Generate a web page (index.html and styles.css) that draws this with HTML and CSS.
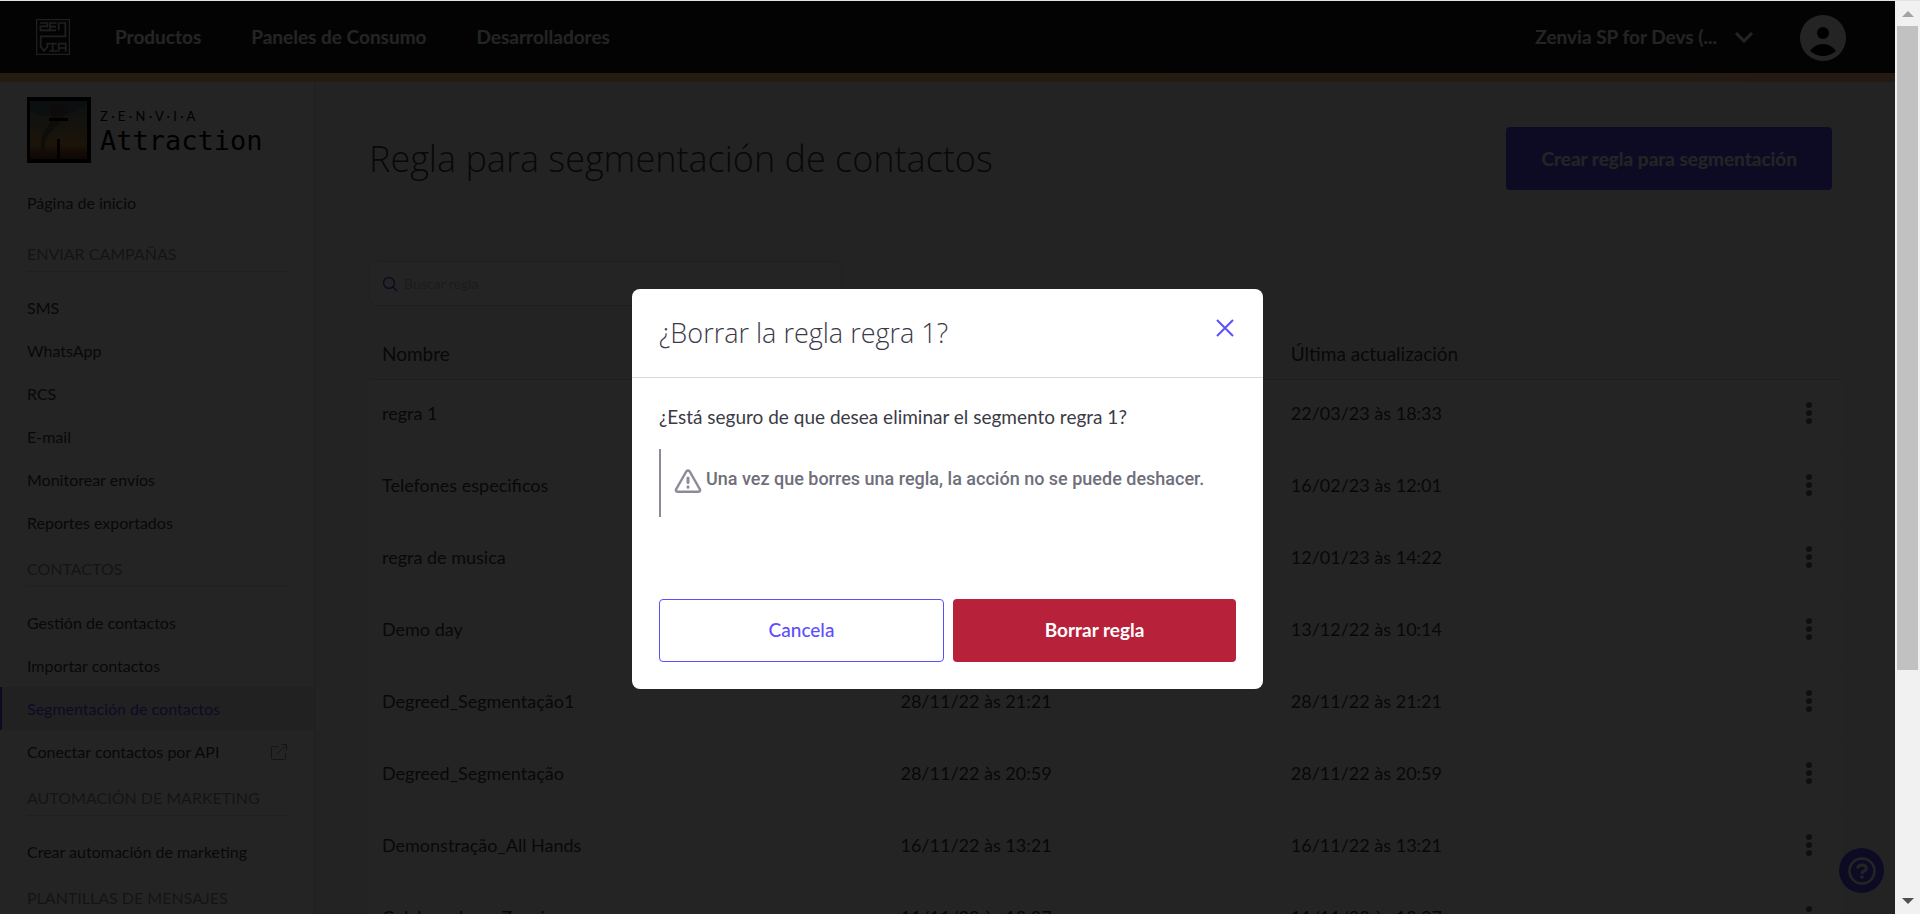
FILE: index.html
```
<!DOCTYPE html>
<html lang="es">
<head>
    <meta charset="UTF-8">
    <title>Regla para segmentación de contactos</title>
    <link rel="stylesheet" href="styles.css">
</head>
<body>
    <!-- icono de tres puntos, se repite en cada fila -->
    <svg class="sprite" aria-hidden="true">
        <symbol id="dots" viewBox="0 0 8 24">
            <circle cx="4" cy="4" r="3"/>
            <circle cx="4" cy="12" r="3"/>
            <circle cx="4" cy="20" r="3"/>
        </symbol>
    </svg>

    <div class="page">
        <header class="topbar">
            <a class="brand" href="#" aria-label="Zenvia">
                <svg width="34" height="36" viewBox="0 0 102 108" fill="none" stroke="#fff">
                    <rect x="2" y="2" width="98" height="104" stroke-width="3"/>
                    <path stroke-width="5" stroke-opacity=".85" d="M12 12H34V22H13V34H60M62 12H42V34M42 23H60M68 34V12H88V52H14V83L24 96L34 84V74H62M50 74V96M40 96H64M68 98V74H89V98M68 87H89"/>
                </svg>
            </a>
            <nav class="menu">
                <a href="#">Productos</a>
                <a href="#">Paneles de Consumo</a>
                <a href="#">Desarrolladores</a>
            </nav>
            <button class="account" type="button">
                Zenvia SP for Devs (...
                <svg width="18" height="12" viewBox="0 0 18 12" fill="none" stroke="#fff" stroke-width="3"><path d="M1 2L9 10L17 2"/></svg>
            </button>
            <a class="avatar" href="#" aria-label="Perfil">
                <svg width="48" height="48" viewBox="0 0 48 48">
                    <circle cx="24" cy="25" r="23" fill="#fff"/>
                    <circle cx="24" cy="20" r="6"/>
                    <path d="M11 38Q16 31 24 31Q32 31 37 38Q31 43 24 43Q17 43 11 38Z"/>
                </svg>
            </a>
        </header>
        <div class="stripe"></div>

        <div class="layout">
            <aside class="sidebar">
                <a class="product" href="#">
                    <svg width="64" height="66" viewBox="0 0 64 66">
                        <defs>
                            <linearGradient id="sky" x1="0" y1="0" x2="0" y2="1">
                                <stop offset="0" stop-color="#567f80"/>
                                <stop offset=".4" stop-color="#8f7f5c"/>
                                <stop offset=".75" stop-color="#c09048"/>
                                <stop offset=".88" stop-color="#8f5030"/>
                                <stop offset="1" stop-color="#5b3424"/>
                            </linearGradient>
                        </defs>
                        <rect width="64" height="66"/>
                        <rect x="3" y="4" width="57" height="58" fill="url(#sky)"/>
                        <path d="M3 4H60V8Q42 20 30 17Q14 22 3 14Z" fill="#44606a" opacity=".7"/>
                        <path d="M20 6Q30 20 17 34Q11 46 16 58H19Q15 46 23 36Q38 22 42 8Z" fill="#5f5142" opacity=".8"/>
                        <path d="M22 21H41V24H22ZM30 42H33V62H30Z"/>
                    </svg>
                    <span class="product-name">
                        <span class="product-brand">Z · E · N · V · I · A</span>
                        <span class="product-title">Attraction</span>
                    </span>
                </a>
                <nav class="side-nav">
                    <a class="home" href="#">Página de inicio</a>
                    <h2>ENVIAR CAMPAÑAS</h2>
                    <a href="#">SMS</a>
                    <a href="#">WhatsApp</a>
                    <a href="#">RCS</a>
                    <a href="#">E-mail</a>
                    <a href="#">Monitorear envíos</a>
                    <a href="#">Reportes exportados</a>
                    <h2>CONTACTOS</h2>
                    <a href="#">Gestión de contactos</a>
                    <a href="#">Importar contactos</a>
                    <a class="active" href="#">Segmentación de contactos</a>
                    <a href="#">
                        Conectar contactos por API
                        <svg width="16" height="16" viewBox="0 0 16 16" fill="none" stroke="#8f8f99"><path d="M7 2.5H1.500Q.5 2.500.5 3.500V14.500Q.5 15.500 1.500 15.500H13.500Q14.500 15.500 14.500 14.500V9M6 10L15.500.5M10.500.5H15.500V6"/></svg>
                    </a>
                    <h2>AUTOMACIÓN DE MARKETING</h2>
                    <a href="#">Crear automación de marketing</a>
                    <h2>PLANTILLAS DE MENSAJES</h2>
                </nav>
            </aside>

            <main class="content">
                <div class="heading">
                    <h1>Regla para segmentación de contactos</h1>
                    <button class="create" type="button">Crear regla para segmentación</button>
                </div>
                <label class="search">
                    <svg width="16" height="16" viewBox="0 0 16 16" fill="none" stroke="#5c4fff" stroke-width="1.500"><circle cx="7" cy="7" r="5.500"/><path d="M11 11L15 15"/></svg>
                    <input type="search" placeholder="Buscar regla" aria-label="Buscar regla">
                </label>
                <table class="rules">
                    <thead>
                        <tr><th class="col-name">Nombre</th><th class="col-date"></th><th>Última actualización</th><th class="col-more"></th></tr>
                    </thead>
                    <tbody>
                        <tr><td>regra 1</td><td></td><td>22/03/23 às 18:33</td><td><button class="more" type="button" aria-label="Opciones"><svg width="8" height="24"><use href="#dots"/></svg></button></td></tr>
                        <tr><td>Telefones especificos</td><td></td><td>16/02/23 às 12:01</td><td><button class="more" type="button" aria-label="Opciones"><svg width="8" height="24"><use href="#dots"/></svg></button></td></tr>
                        <tr><td>regra de musica</td><td></td><td>12/01/23 às 14:22</td><td><button class="more" type="button" aria-label="Opciones"><svg width="8" height="24"><use href="#dots"/></svg></button></td></tr>
                        <tr><td>Demo day</td><td></td><td>13/12/22 às 10:14</td><td><button class="more" type="button" aria-label="Opciones"><svg width="8" height="24"><use href="#dots"/></svg></button></td></tr>
                        <tr><td>Degreed_Segmentação1</td><td>28/11/22 às 21:21</td><td>28/11/22 às 21:21</td><td><button class="more" type="button" aria-label="Opciones"><svg width="8" height="24"><use href="#dots"/></svg></button></td></tr>
                        <tr><td>Degreed_Segmentação</td><td>28/11/22 às 20:59</td><td>28/11/22 às 20:59</td><td><button class="more" type="button" aria-label="Opciones"><svg width="8" height="24"><use href="#dots"/></svg></button></td></tr>
                        <tr><td>Demonstração_All Hands</td><td>16/11/22 às 13:21</td><td>16/11/22 às 13:21</td><td><button class="more" type="button" aria-label="Opciones"><svg width="8" height="24"><use href="#dots"/></svg></button></td></tr>
                        <tr><td>Colaboradores Zenvia</td><td>11/11/22 às 18:37</td><td>11/11/22 às 18:37</td><td><button class="more" type="button" aria-label="Opciones"><svg width="8" height="24"><use href="#dots"/></svg></button></td></tr>
                    </tbody>
                </table>
            </main>
        </div>

        <button class="help" type="button" aria-label="Ayuda">
            <svg width="28" height="28" viewBox="0 0 28 28" fill="none" stroke="#fff">
                <circle cx="14" cy="14" r="12.500" stroke-width="2.500"/>
                <path stroke-width="3" d="M9.500 11.500Q10 8 14 8Q18.300 8 18.300 11.200Q18.300 13.200 16 14.200Q14 15 14 17"/>
                <circle cx="14" cy="20" r="1.800" fill="#fff" stroke="none"/>
            </svg>
        </button>

        <div class="backdrop">
            <div class="dialog" role="dialog" aria-modal="true" aria-labelledby="dialog-title">
                <div class="dialog-head">
                    <h2 id="dialog-title">¿Borrar la regla regra 1?</h2>
                    <button class="close" type="button" aria-label="Cerrar">
                        <svg width="18" height="18" viewBox="0 0 18 18" fill="none" stroke="#5c4fff" stroke-width="2"><path d="M1 1L17 17M17 1L1 17"/></svg>
                    </button>
                </div>
                <div class="dialog-body">
                    <p class="question">¿Está seguro de que desea eliminar el segmento regra 1?</p>
                    <div class="warning">
                        <svg width="28" height="24" viewBox="0 0 28 24" fill="none" stroke="#8b8c98" stroke-width="2.500" stroke-linejoin="round" stroke-linecap="round">
                            <path d="M12.300 2.500Q14 .5 15.700 2.500L26 20.500Q26.500 22.500 24.500 22.700H3.500Q1.500 22.500 2 20.500Z"/>
                            <path d="M14 9V13.500M14 17.800V18.200" stroke-width="3"/>
                        </svg>
                        <p>Una vez que borres una regla, la acción no se puede deshacer.</p>
                    </div>
                    <div class="actions">
                        <button class="cancel" type="button">Cancela</button>
                        <button class="delete" type="button">Borrar regla</button>
                    </div>
                </div>
            </div>
        </div>
    </div>

    <div class="scrollbar" aria-hidden="true">
        <svg class="arrow" width="12" height="6" viewBox="0 0 12 6"><path d="M0 6L6 0L12 6Z" fill="#a3a3a3"/></svg>
        <div class="track"><div class="thumb"></div></div>
        <svg class="arrow" width="12" height="6" viewBox="0 0 12 6"><path d="M0 0L6 6L12 0Z" fill="#505050"/></svg>
    </div>
</body>
</html>
```
FILE: styles.css
```
*{
    margin: 0;
    padding: 0;
    box-sizing: border-box;
}
body{
    display: flex;
    height: 100vh;
    overflow: hidden;
    border-top: 1px solid #e0e3e0;
    font-family: Lato, "Open Sans", sans-serif;
    color: #3b3a47;
}
a{
    color: inherit;
    text-decoration: none;
}
button{
    font: 700 19px/24px Lato, sans-serif;
    border: 0;
    background: none;
    cursor: pointer;
}
svg{
    display: block;
    flex: none;
}
.sprite{
    position: absolute;
    width: 0;
    height: 0;
}
.page{
    position: relative;
    flex: 1;
    display: flex;
    flex-direction: column;
    overflow: hidden;
    background: #f8f8f8;
}

/* barra superior */
.topbar{
    flex: none;
    display: flex;
    align-items: center;
    height: 72px;
    padding: 0 48px 0 36px;
    background: #1b1b1b;
    color: #fff;
    font: 700 19px/24px Lato, sans-serif;
}
.menu{
    flex: 1;
    display: flex;
    gap: 50px;
    margin-left: 45px;
}
.account{
    display: flex;
    align-items: center;
    gap: 18px;
    margin-right: 46px;
    color: #fff;
}
.stripe{
    flex: none;
    height: 9px;
    background: linear-gradient(90deg, #fac86b, #ffb987);
}
.layout{
    flex: 1;
    display: flex;
    min-height: 0;
}

/* menu lateral */
.sidebar{
    flex: none;
    width: 315px;
    overflow: hidden;
    border-right: 1px solid #dcdcdc;
    background: #fff;
}
.product{
    display: flex;
    gap: 9px;
    padding: 15px 27px 18px;
    color: #000;
}
.product-name{
    display: flex;
    flex-direction: column;
    padding-top: 9px;
}
.product-brand{
    font: 13px/20px Lato, sans-serif;
}
.product-title{
    font: 27px/30px "DejaVu Sans Mono", monospace;
}
.side-nav a{
    display: flex;
    align-items: center;
    justify-content: space-between;
    height: 43px;
    padding: 0 27px;
    font-size: 16px;
}
.side-nav .home{
    margin-bottom: 5px;
}
.side-nav .active{
    padding-left: 25px;
    border-left: 2px solid #5c4fff;
    background: #e9e9ec;
    color: #5c4fff;
}
.side-nav h2{
    margin: 0 27px 14px;
    padding: 14px 0 6px;
    border-bottom: 1px solid #dcdcdc;
    font-size: 16px;
    font-weight: 400;
    line-height: 22px;
    color: #8f8f99;
}

/* contenido */
.content{
    flex: 1;
    padding: 45px 53px 0 54px;
}
.heading{
    display: flex;
    align-items: center;
    justify-content: space-between;
    padding-right: 10px;
}
.heading h1{
    font-family: "Open Sans", sans-serif;
    font-size: 36px;
    font-weight: 300;
}
.create{
    height: 63px;
    padding: 0 35px;
    border-radius: 4px;
    background: #5c4fff;
    color: #fff;
}
.search{
    display: flex;
    align-items: center;
    gap: 6px;
    width: 473px;
    height: 45px;
    margin-top: 71px;
    padding: 0 12px;
    border: 1px solid #dcdcdc;
    border-radius: 8px;
    background: #fff;
}
.search input{
    flex: 1;
    border: 0;
    outline: 0;
    background: none;
    font: 14px/20px Lato, sans-serif;
}
.search input::placeholder{
    color: #c0c0c8;
}
.rules{
    width: 100%;
    margin-top: 24px;
    border-collapse: collapse;
    table-layout: fixed;
    text-align: left;
}
.rules th{
    height: 49px;
    border-bottom: 1px solid #dcdcdc;
    padding: 0 13px;
    font: 19px/24px Lato, sans-serif;
}
.rules td{
    height: 72px;
    padding: 0 13px 4px;
    border-bottom: 1px solid #f4f4f4;
    background: #fff;
    font-size: 18px;
}
.col-name{
    width: 35.2%;
}
.col-date{
    width: 26.5%;
}
.col-more{
    width: 76px;
}
.more{
    display: block;
    margin-left: auto;
    padding: 0 16px;
    fill: #6e6e80;
}

.help{
    position: absolute;
    right: 11px;
    bottom: 21px;
    display: flex;
    align-items: center;
    justify-content: center;
    width: 45px;
    height: 45px;
    border-radius: 50%;
    background: #5c4fff;
}

/* ventana modal */
.backdrop{
    position: absolute;
    top: 0;
    right: 0;
    bottom: 0;
    left: 0;
    display: flex;
    justify-content: center;
    align-items: flex-start;
    padding-top: 288px;
    background: rgba(0, 0, 0, .86);
}
.dialog{
    width: 631px;
    border-radius: 8px;
    background: #fff;
}
.dialog-head{
    display: flex;
    align-items: flex-start;
    justify-content: space-between;
    padding: 24px 27px;
    border-bottom: 1px solid #d8d8dc;
}
.dialog-head h2{
    font-family: "Open Sans", sans-serif;
    font-size: 27px;
    font-weight: 300;
    line-height: 40px;
}
.close{
    margin: 6px 2px;
}
.dialog-body{
    padding: 27px;
}
.question{
    font: 19px/24px Lato, sans-serif;
}
.warning{
    display: flex;
    gap: 4px;
    height: 68px;
    margin: 20px 0 82px;
    padding: 18px 0 0 13px;
    border-left: 2px solid #8b8c98;
    font: 500 18px/24px Roboto, sans-serif;
    color: #6e6f7b;
}
.warning svg{
    margin-top: 2px;
}
.actions{
    display: flex;
    gap: 9px;
}
.actions button{
    flex: 1;
    height: 63px;
    padding-bottom: 2px;
    border-radius: 4px;
}
.actions .cancel{
    border: 1px solid #5c4fff;
    color: #5c4fff;
    font-weight: 500;
}
.actions .delete{
    background: #b8213a;
    color: #fff;
}

/* barra de desplazamiento */
.scrollbar{
    flex: none;
    display: flex;
    flex-direction: column;
    align-items: center;
    gap: 9px;
    width: 25px;
    padding: 10px 0;
    background: #f1f1f1;
}
.track{
    flex: 1;
    width: 21px;
}
.thumb{
    height: 74.6%;
    background: #c1c1c1;
}
```
